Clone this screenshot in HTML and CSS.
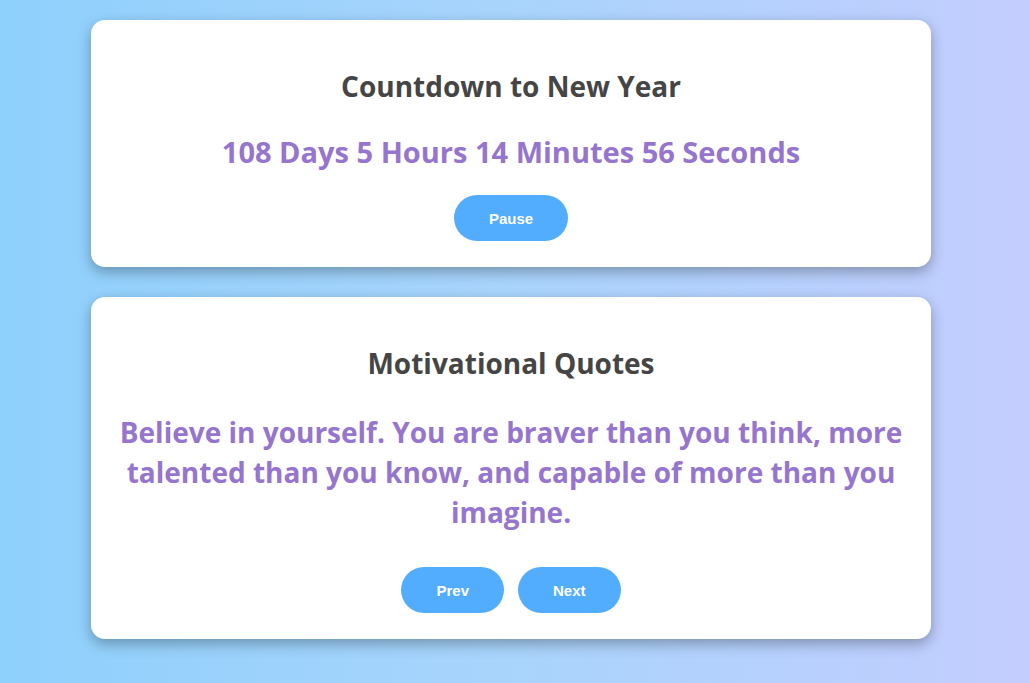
FILE: index.html
```html
<!DOCTYPE html>
<html lang="en">
<head>
<meta charset="utf-8">
<title>Countdown and Quotes</title>
<link rel="stylesheet" href="styles.css">
</head>
<body>
<main class="page">
  <section class="card">
    <h2 class="card-title">Countdown to New Year</h2>
    <div class="timer">108 Days 5 Hours 14 Minutes 56 Seconds</div>
    <div class="actions actions-timer">
      <button class="btn" type="button">Pause</button>
    </div>
  </section>
  <section class="card">
    <h2 class="card-title">Motivational Quotes</h2>
    <p class="quote">Believe in yourself. You are braver than you think, more talented than you know, and capable of more than you imagine.</p>
    <div class="actions actions-quote">
      <button class="btn" type="button">Prev</button>
      <button class="btn" type="button">Next</button>
    </div>
  </section>
</main>
</body>
</html>
```
FILE: styles.css
```css
html, body {
  margin: 0;
  padding: 0;
}
body {
  min-height: 683px;
  background: linear-gradient(to right, #8ed0fc 0%, #a9d4fc 50%, #c3cdfe 100%);
  font-family: "Open Sans", "Noto Sans", sans-serif;
}
.page {
  display: flex;
  flex-direction: column;
  gap: 30px;
  width: 840px;
  margin: 0 auto;
  padding: 20px 0;
  position: relative;
  left: -4px;
}
.card {
  background: #fff;
  border-radius: 14px;
  box-shadow: 0 5px 14px rgba(0, 0, 0, 0.3);
  padding: 46px 20px 26px;
  text-align: center;
}
.card-title {
  margin: 0;
  font-size: 28px;
  line-height: 40px;
  font-weight: 700;
  color: #454545;
}
.timer {
  margin-top: 26px;
  font-size: 29px;
  line-height: 40px;
  font-weight: 700;
  color: #9575cd;
}
.quote {
  margin: 29px 0 0;
  font-size: 28px;
  line-height: 40px;
  font-weight: 700;
  color: #9575cd;
}
.actions {
  display: flex;
  justify-content: center;
  gap: 14px;
}
.actions-timer {
  margin-top: 23px;
}
.actions-quote {
  margin-top: 35px;
}
.btn {
  border: none;
  border-radius: 23px;
  background: #52adfe;
  color: #fff;
  font-family: "Liberation Sans", Arial, sans-serif;
  font-weight: 700;
  font-size: 15px;
  line-height: 16px;
  padding: 16px 35px 14px;
  cursor: pointer;
}
```
